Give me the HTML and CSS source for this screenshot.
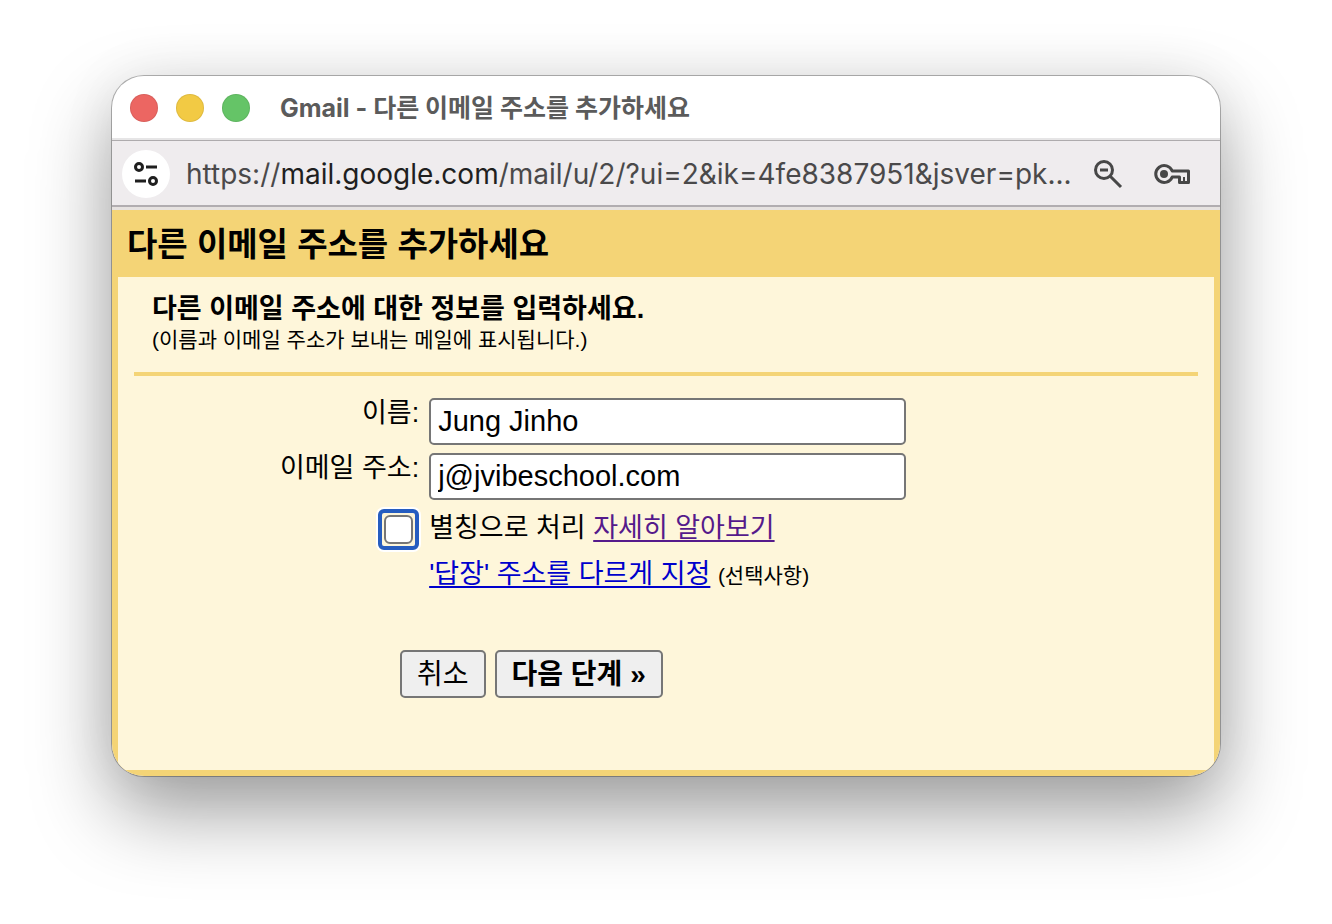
FILE: index.html
```html
<!DOCTYPE html>
<html lang="ko">
<head>
    <meta charset="utf-8">
    <title>Gmail - 다른 이메일 주소를 추가하세요</title>
    <link rel="stylesheet" href="styles.css">
</head>
<body>
    <div class="window">
        <header class="title-bar">
            <div class="lights">
                <button type="button" class="light close" aria-label="닫기"></button>
                <button type="button" class="light minimize" aria-label="최소화"></button>
                <button type="button" class="light maximize" aria-label="최대화"></button>
            </div>
            <div class="window-title">Gmail - 다른 이메일 주소를 추가하세요</div>
        </header>

        <div class="address-bar">
            <button type="button" class="site-info" aria-label="사이트 정보">
                <svg width="26" height="26" viewBox="0 0 26 26" fill="none" stroke="#1f1f1f" stroke-width="3">
                    <circle cx="6" cy="6" r="3.5"/>
                    <path d="M13 6h11M2 20h11"/>
                    <circle cx="20" cy="20" r="3.5"/>
                </svg>
            </button>
            <div class="url">https://<span class="host">mail.google.com</span>/mail/u/2/?ui=2&amp;ik=4fe8387951&amp;jsver=pk...</div>
            <button type="button" class="tool" aria-label="축소">
                <svg width="30" height="30" viewBox="0 0 30 30" fill="none" stroke="#474747" stroke-width="3">
                    <circle cx="10" cy="11" r="8.5"/>
                    <path d="M6 11h8M16 17l11 11"/>
                </svg>
            </button>
            <button type="button" class="tool" aria-label="비밀번호 관리">
                <svg width="36" height="22" viewBox="0 0 36 22" fill="none" stroke="#474747" stroke-width="3" stroke-linejoin="round">
                    <path d="M18.2 8H34.5V19.5H25.5V14H18.2A8.5 8.5 0 1 1 18.2 8z"/>
                    <path d="M30 14v5" stroke-width="2"/>
                    <circle cx="10" cy="11" r="4" fill="#474747" stroke="none"/>
                </svg>
            </button>
        </div>

        <main class="page">
            <h1>다른 이메일 주소를 추가하세요</h1>
            <form class="panel">
                <div class="intro">
                    <h2>다른 이메일 주소에 대한 정보를 입력하세요.</h2>
                    <p>(이름과 이메일 주소가 보내는 메일에 표시됩니다.)</p>
                </div>

                <div class="fields">
                    <label class="field-label" for="name">이름:</label>
                    <input class="text-box" type="text" id="name" value="Jung Jinho">

                    <label class="field-label" for="email">이메일 주소:</label>
                    <input class="text-box" type="text" id="email" value="j@jvibeschool.com">

                    <span class="check-ring"><input class="check" type="checkbox" id="alias"></span>
                    <div class="line"><label for="alias">별칭으로 처리</label> <a class="visited" href="#">자세히 알아보기</a></div>

                    <div class="line reply"><a href="#">'답장' 주소를 다르게 지정</a> <span class="optional">(선택사항)</span></div>
                </div>

                <div class="buttons">
                    <button type="button">취소</button>
                    <button type="submit" class="next">다음 단계 »</button>
                </div>
            </form>
        </main>
    </div>
</body>
</html>
```
FILE: styles.css
```css
* {
    box-sizing: border-box;
}

body {
    min-height: 100vh;
    margin: 0;
    padding: 76px 112px;
    background: #fff;
    color: #000;
    font-family: "Liberation Sans", "Noto Sans CJK KR", sans-serif;
    font-size: 27px;
}

.window {
    border-radius: 32px;
    overflow: hidden;
    background: #fff;
    box-shadow: 0 0 0 1px rgba(0, 0, 0, 0.28), 0 36px 80px rgba(0, 0, 0, 0.38), 0 0 60px rgba(0, 0, 0, 0.06);
}

.title-bar {
    display: flex;
    align-items: center;
    gap: 30px;
    height: 64px;
    padding: 2px 18px 0;
    border-bottom: 2px solid #e6e5e6;
}

.lights {
    display: flex;
    gap: 18px;
}

.light {
    width: 28px;
    height: 28px;
    padding: 0;
    border: 1px solid rgba(0, 0, 0, 0.08);
    border-radius: 50%;
}

.close {
    background: #ec6662;
}

.minimize {
    background: #f2ca44;
}

.maximize {
    background: #65c467;
}

.window-title {
    color: #5b5b5b;
    font-family: Inter, "Noto Sans CJK KR", sans-serif;
    font-size: 25px;
    font-weight: 700;
    line-height: 36px;
}

.address-bar {
    display: flex;
    align-items: center;
    height: 70px;
    padding: 0 30px 0 10px;
    border-top: 1px solid #aeabad;
    border-bottom: 3px solid #e6e2e0;
    background: #efecee;
    box-shadow: inset 0 -2px #b1adb0;
}

.site-info {
    display: grid;
    flex: none;
    place-items: center;
    width: 48px;
    height: 48px;
    margin-right: 16px;
    padding: 0;
    border: none;
    border-radius: 50%;
    background: #fff;
}

.url {
    flex: 1;
    min-width: 0;
    color: #4a494a;
    font-family: Inter, "Noto Sans CJK KR", sans-serif;
    font-size: 28px;
    line-height: 40px;
    white-space: nowrap;
}

.host {
    color: #1f1f1f;
}

.tool {
    display: flex;
    flex: none;
    margin-left: 30px;
    padding: 0;
    border: none;
    background: none;
}

.page {
    padding: 0 6px 6px;
    background: #f4d476;
}

h1 {
    margin: 0;
    padding: 11px 9px 8px;
    font-size: 33px;
    line-height: 48px;
}

.panel {
    min-height: 493px;
    padding: 16px;
    background: #fef6da;
}

.intro {
    padding: 0 18px 18px;
    border-bottom: 4px solid #f4d476;
}

h2 {
    margin: 0;
    font-size: 27px;
    line-height: 33px;
}

.intro p {
    margin: 0;
    font-size: 21px;
    line-height: 28px;
}

.fields {
    display: grid;
    grid-template-columns: 26.8% 1fr;
    gap: 8px 10px;
    padding-top: 22px;
}

.field-label {
    line-height: 31px;
    text-align: right;
}

.text-box {
    width: 62%;
    height: 47px;
    padding: 0 7px;
    border: 2px solid #767676;
    border-radius: 5px;
    background: #fff;
    color: #000;
    font-family: inherit;
    font-size: 29px;
}

.check-ring {
    display: flex;
    align-items: center;
    justify-content: center;
    justify-self: end;
    width: 41px;
    height: 41px;
    margin-top: 1px;
    border: 4px solid #265dc0;
    border-radius: 6px;
    box-shadow: 0 0 0 2px #fff;
}

.check {
    appearance: none;
    width: 29px;
    height: 29px;
    margin: 0;
    border: 2px solid #767676;
    border-radius: 6px;
    background: #fff;
    outline: none;
}

.line {
    line-height: 40px;
}

.reply {
    grid-column: 2;
    margin-top: -4px;
}

a {
    color: #0000cc;
    text-decoration-thickness: 2px;
    text-underline-offset: 3px;
}

.visited {
    color: #551a8b;
}

.optional {
    font-size: 21px;
}

.buttons {
    display: flex;
    gap: 9px;
    margin-top: 54px;
    padding-left: 25%;
}

.buttons button {
    height: 48px;
    padding: 0 15px 6px;
    border: 2px solid #767676;
    border-radius: 5px;
    background: #efefef;
    color: #000;
    font-family: inherit;
    font-size: 28px;
}

.buttons .next {
    font-weight: 700;
}
```
